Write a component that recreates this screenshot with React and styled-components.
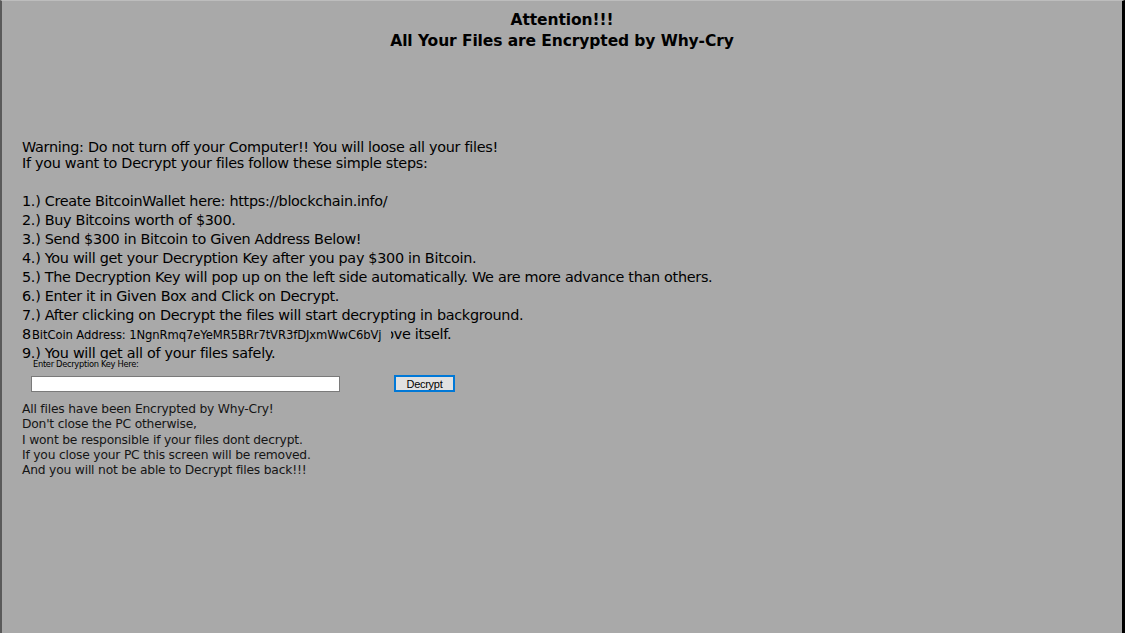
import React from 'react'
import styled, { createGlobalStyle } from 'styled-components'

const GlobalStyle = createGlobalStyle`
  html, body {
    margin: 0;
    padding: 0;
    background: #a9a9a9;
  }
  * { box-sizing: border-box; }
`

const Screen = styled.div`
  width: 1125px;
  height: 633px;
  background: #a9a9a9;
  border-left: 2px solid #5a5a5a;
  border-right: 3px solid #000;
  border-top: 1px solid #bdbdbd;
  font-family: "DejaVu Sans", "Liberation Sans", sans-serif;
  color: #000;
  overflow: hidden;
`

const Header = styled.h1`
  margin: 0;
  padding-top: 9px;
  text-align: center;
  font-size: 15.5px;
  line-height: 21px;
  font-weight: bold;
  letter-spacing: -0.1px;
`

const Body = styled.div`
  padding-left: 20px;
  margin-top: 87px;
`

const Warning = styled.p`
  margin: 0;
  font-size: 14.4px;
  line-height: 16px;
  letter-spacing: -0.3px;
`

const Steps = styled.ol`
  position: relative;
  list-style: none;
  margin: 21px 0 0;
  padding: 0;
  font-size: 14.4px;
  line-height: 19px;
  letter-spacing: -0.3px;
`

const Step = styled.li``

const Overlay = styled.span`
  position: absolute;
  left: ${p => p.left}px;
  top: ${p => p.top}px;
  background: #a9a9a9;
  font-size: ${p => p.size}px;
  line-height: ${p => p.height}px;
  padding-right: ${p => p.pad || 2}px;
  white-space: nowrap;
  letter-spacing: ${p => p.spacing || 0}px;
`

const KeyRow = styled.div`
  display: flex;
  align-items: center;
  gap: 54px;
  margin: 12px 0 0 9px;
`

const KeyInput = styled.input`
  width: 309px;
  height: 16px;
  border: 1px solid #7a7a7a;
  background: #fff;
  padding: 0 3px;
  outline: none;
`

const DecryptButton = styled.button`
  width: 61px;
  height: 17px;
  padding: 0;
  border: 2px solid #0078d7;
  background: #e1e1e1;
  font-family: "Liberation Sans", Arial, sans-serif;
  font-size: 11px;
  letter-spacing: -0.3px;
  color: #000;
  box-shadow: inset 0 0 0 1px #e1e1e1;
  cursor: pointer;
`

const Notice = styled.p`
  margin: 10px 0 0;
  font-size: 12.3px;
  line-height: 15.3px;
  letter-spacing: -0.2px;
  color: #151515;
`

const steps = [
  '1.) Create BitcoinWallet here: https://blockchain.info/',
  '2.) Buy Bitcoins worth of $300.',
  '3.) Send $300 in Bitcoin to Given Address Below!',
  '4.) You will get your Decryption Key after you pay $300 in Bitcoin.',
  '5.) The Decryption Key will pop up on the left side automatically. We are more advance than others.',
  '6.) Enter it in Given Box and Click on Decrypt.',
  '7.) After clicking on Decrypt the files will start decrypting in background.',
  '8.) After Decryption is finished this Software will remove itself.',
  '9.) You will get all of your files safely.',
]

export default function App() {
  return (
    <Screen>
      <GlobalStyle />
      <Header>
        Attention!!!
        <br />
        All Your Files are Encrypted by Why-Cry
      </Header>
      <Body>
        <Warning>
          Warning: Do not turn off your Computer!! You will loose all your files!
          <br />
          If you want to Decrypt your files follow these simple steps:
        </Warning>
        <Steps>
          {steps.map(s => (
            <Step key={s}>{s}</Step>
          ))}
          <Overlay left={10} top={135} size={11.6} height={17} spacing={-0.1} pad={10}>
            BitCoin Address: 1NgnRmq7eYeMR5BRr7tVR3fDJxmWwC6bVj
          </Overlay>
          <Overlay left={11} top={167} size={8.3} height={10} spacing={-0.3}>
            Enter Decryption Key Here:
          </Overlay>
        </Steps>
        <KeyRow>
          <KeyInput type="text" />
          <DecryptButton>Decrypt</DecryptButton>
        </KeyRow>
        <Notice>
          All files have been Encrypted by Why-Cry!
          <br />
          Don't close the PC otherwise,
          <br />
          I wont be responsible if your files dont decrypt.
          <br />
          If you close your PC this screen will be removed.
          <br />
          And you will not be able to Decrypt files back!!!
        </Notice>
      </Body>
    </Screen>
  )
}
